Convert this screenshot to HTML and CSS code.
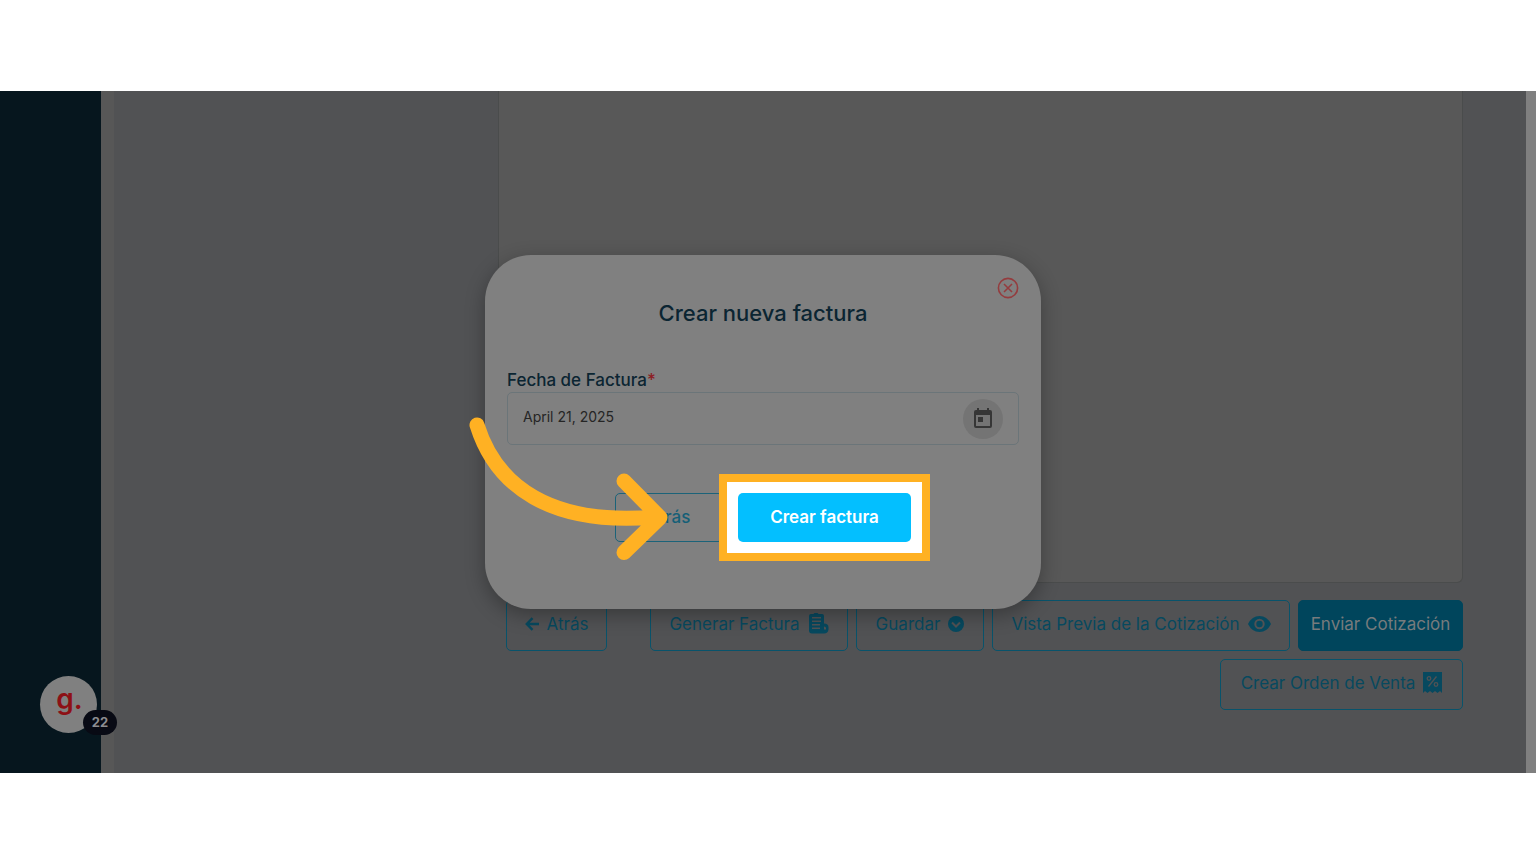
FILE: index.html
```html
<!DOCTYPE html>
<html lang="es">
<head>
<meta charset="utf-8">
<title>Crear nueva factura</title>
<link rel="stylesheet" href="styles.css">
</head>
<body>
<div class="app">
  <aside class="sidebar">
    <button class="guide" aria-label="Guías">
      <span class="guide-logo">g.</span>
      <span class="guide-count">22</span>
    </button>
  </aside>
  <main class="page">
    <section class="quote">
      <div class="sheet"></div>
      <div class="toolbar">
        <button class="btn btn-back">
          <svg width="14" height="14" viewBox="0 0 14 14" fill="none" stroke="currentColor" stroke-width="2.4"><path d="M14 7H2M7.5 1.2 1.8 7l5.700 5.800"/></svg>
          Atrás
        </button>
        <button class="btn btn-invoice">Generar Factura
          <svg width="21" height="21" viewBox="0 0 21 21"><path fill="currentColor" fill-rule="evenodd" d="M3 1h2.500l1-1h3l1 1H14q2 0 2 2v7.500q4.500 0 4.500 4v2q-.5 4-4.500 4H4q-3 0-3-3V3q0-2 2-2zM4 4v1.500h9V4zm0 3.500V9h9V7.500zM4 11v1.500h8V11zm0 3.500V16h8v-1.500zM16 13.500v3h2v-1.500q0-1.500-2-1.500z"/></svg>
        </button>
        <button class="btn btn-save">Guardar
          <svg width="16" height="16" viewBox="0 0 16 16"><circle cx="8" cy="8" r="8" fill="currentColor"/><path d="m4 6.500 4 4 4-4" fill="none" stroke="#515254" stroke-width="2"/></svg>
        </button>
        <button class="btn btn-preview">Vista Previa de la Cotización
          <svg width="23" height="16" viewBox="0 0 23 16"><path fill="currentColor" d="M0 8Q4 0 11.500 0T23 8q-4 8-11.500 8T0 8z"/><circle cx="11.500" cy="8" r="4.200" fill="none" stroke="#515254" stroke-width="2"/></svg>
        </button>
        <button class="btn btn-send">Enviar Cotización</button>
        <button class="btn btn-order">Crear Orden de Venta
          <svg width="19" height="21" viewBox="0 0 19 21"><path fill="currentColor" d="M0 0h19v21l-2-2-2.500 2-2.500-2-2.500 2L7 19l-2.500 2L2 19l-2 2z"/><g fill="none" stroke="#515254" stroke-width="1.300"><path d="m13.500 4.500-8 10"/><circle cx="6" cy="6.500" r="1.800"/><circle cx="13" cy="12.500" r="1.800"/></g></svg>
        </button>
      </div>
    </section>
  </main>
  <div class="scrollbar"></div>

  <div class="overlay">
    <div class="modal" role="dialog" aria-labelledby="modal-title">
      <button class="close" aria-label="Cerrar">
        <svg width="22" height="22" viewBox="0 0 22 22" fill="none" stroke="currentColor" stroke-width="1.600"><circle cx="11" cy="11" r="9.600"/><path d="m7 7 8 8M15 7l-8 8"/></svg>
      </button>
      <h1 class="title" id="modal-title">Crear nueva factura</h1>
      <label class="label" for="date">Fecha de Factura<span class="required">*</span></label>
      <div class="field">
        <input class="date" id="date" type="text" value="April 21, 2025">
        <button class="calendar" aria-label="Abrir calendario">
          <svg width="20" height="21" viewBox="0 0 20 21"><path fill="currentColor" fill-rule="evenodd" d="M4 0h2v2h8V0h2v2h1q2 0 2 2v14q0 2-2 2H3q-2 0-2-2V4q0-2 2-2h1zM3 7v11h14V7z"/><path fill="currentColor" d="M5 9h5v5H5z"/></svg>
        </button>
      </div>
      <div class="actions">
        <button class="action action-back">Atrás</button>
        <div class="highlight"><button class="action action-create">Crear factura</button></div>
      </div>
      <svg class="arrow" width="204" height="150" viewBox="466 414 204 150" fill="none" stroke="#ffb123" stroke-width="15" stroke-linecap="round" stroke-linejoin="round"><path d="M477 425C496 486 550 526 655 517M624 481l36 36.500L624 552.500"/></svg>
    </div>
  </div>
</div>
</body>
</html>
```
FILE: styles.css
```css
* {
  box-sizing: border-box;
}

body {
  margin: 0;
  min-height: 100vh;
  padding: 91px 0;
  display: flex;
  background: #fff;
  font-family: Inter, "Open Sans", sans-serif;
  font-size: 17px;
}

button,
input {
  font: inherit;
  color: inherit;
  margin: 0;
  padding: 0;
  border: 0;
  background: none;
}

.app {
  position: relative;
  flex: 1;
  display: flex;
  background: #515254;
}

.sidebar {
  width: 101px;
  display: flex;
  flex-direction: column;
  justify-content: flex-end;
  align-items: center;
  padding: 0 0 40px 36px;
  background: #06161e;
}

.guide {
  position: relative;
  width: 57px;
  height: 57px;
  border-radius: 50%;
  background: #808080;
  color: #8d1015;
}

.guide-logo {
  display: block;
  padding: 0 0 12px 2px;
  font-size: 28px;
  font-weight: 600;
  line-height: 40px;
}

.guide-count {
  position: absolute;
  right: -20px;
  bottom: -2px;
  width: 34px;
  height: 25px;
  border-radius: 13px;
  background: #080a14;
  color: #8c8c90;
  font-size: 13px;
  font-weight: 700;
  line-height: 24px;
}

.page {
  flex: 1;
  display: flex;
  border-left: 13px solid #575757;
  padding: 0 63px 63px 384px;
}

.quote {
  flex: 1;
  display: flex;
  flex-direction: column;
  gap: 17px;
}

.sheet {
  flex: 1;
  border: 1px solid #4a4c4c;
  border-top: 0;
  border-radius: 0 0 6px 6px;
  background: #585858;
}

.toolbar {
  display: flex;
  flex-wrap: wrap;
  justify-content: flex-end;
  gap: 8px;
}

.btn {
  display: flex;
  align-items: center;
  justify-content: center;
  gap: 8px;
  height: 51px;
  padding-bottom: 4px;
  border: 1px solid #08536b;
  border-radius: 5px;
  color: #07495f;
  white-space: nowrap;
}

.btn-back {
  width: 101px;
  margin-right: 35px;
}

.btn-invoice {
  width: 198px;
}

.btn-save {
  width: 128px;
}

.btn-preview {
  width: 298px;
}

.btn-send {
  width: 165px;
  border-color: #00455c;
  background: #00455c;
  color: #777b7d;
}

.btn-order {
  width: 243px;
}

.scrollbar {
  width: 10px;
  background: #808080;
}

.overlay {
  position: absolute;
  inset: 0 10px 0 0;
  display: flex;
  align-items: center;
  justify-content: center;
}

.modal {
  position: relative;
  width: 556px;
  padding: 44px 22px 67px;
  border-radius: 46px;
  background: #808080;
  box-shadow: 0 6px 20px rgba(0, 0, 0, 0.3);
}

.close {
  position: absolute;
  top: 22px;
  right: 22px;
  display: flex;
  color: #943c3e;
}

.title {
  margin: 0 0 41px;
  color: #0b2532;
  font-size: 22px;
  font-weight: 500;
  line-height: 28px;
  text-align: center;
}

.label {
  display: block;
  color: #0b2532;
  font-weight: 500;
  line-height: 24px;
}

.required {
  color: #8d1d24;
}

.field {
  display: flex;
  align-items: center;
  height: 53px;
  padding: 0 15px;
  border: 1px solid #6b7579;
  border-radius: 5px;
}

.date {
  flex: 1;
  min-width: 0;
  padding-bottom: 4px;
  color: #252525;
  font-size: 14px;
}

.calendar {
  display: flex;
  align-items: center;
  justify-content: center;
  width: 40px;
  height: 40px;
  border-radius: 50%;
  background: #747474;
  color: #363636;
}

.actions {
  display: flex;
  justify-content: center;
  gap: 15px;
  margin-top: 48px;
}

.action {
  height: 49px;
  padding-bottom: 2px;
  border-radius: 5px;
  font-weight: 500;
}

.action-back {
  width: 108px;
  border: 1px solid #1b6379;
  color: #155f77;
}

.highlight {
  position: relative;
}

.highlight::before {
  content: "";
  position: absolute;
  inset: -19px;
  border: 8px solid #ffb123;
  background: #fff;
}

.action-create {
  position: relative;
  width: 173px;
  background: #03bfff;
  color: #fff;
  font-weight: 600;
}

.arrow {
  position: absolute;
  left: -19px;
  top: 159px;
}
```
